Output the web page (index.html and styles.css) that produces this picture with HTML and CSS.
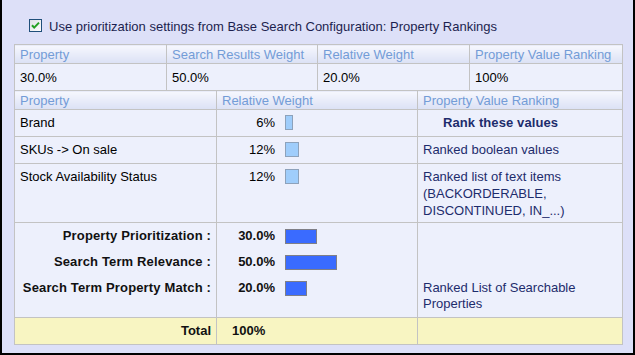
FILE: index.html
```html
<!DOCTYPE html>
<html>
<head>
<meta charset="utf-8">
<link rel="stylesheet" href="styles.css">
</head>
<body>
<div class="panel">
  <div class="opt">
    <svg class="cb" width="13" height="13" viewBox="0 0 13 13">
      <defs>
        <linearGradient id="cbg" x1="0" y1="0" x2="1" y2="1">
          <stop offset="0" stop-color="#dcdfe4"/>
          <stop offset="1" stop-color="#ffffff"/>
        </linearGradient>
      </defs>
      <rect x="0.5" y="0.5" width="12" height="12" fill="url(#cbg)" stroke="#1f4f7a"/>
      <path d="M3 6.2 L5.2 8.6 L10 3.6" fill="none" stroke="#22a022" stroke-width="2"/>
    </svg>
    <span>Use prioritization settings from Base Search Configuration: Property Rankings</span>
  </div>

  <table class="t1">
    <colgroup><col class="c1"><col class="c2"><col class="c3"><col class="c4"></colgroup>
    <tr class="hd"><th>Property</th><th>Search Results Weight</th><th>Relative Weight</th><th>Property Value Ranking</th></tr>
    <tr class="dr"><td>30.0%</td><td>50.0%</td><td>20.0%</td><td>100%</td></tr>
  </table>

  <table class="t2">
    <colgroup><col class="d1"><col class="d2"><col class="d3"></colgroup>
    <tr class="hd"><th>Property</th><th>Relative Weight</th><th>Property Value Ranking</th></tr>
    <tr class="r1">
      <td class="top">Brand</td>
      <td class="top wcell"><div class="w"><span class="pct">6%</span><span class="bar sm" style="width:8px"></span></div></td>
      <td class="top rk"><span class="rkb">Rank these values</span></td>
    </tr>
    <tr class="r2">
      <td class="top">SKUs -&gt; On sale</td>
      <td class="top wcell"><div class="w"><span class="pct">12%</span><span class="bar sm" style="width:14px"></span></div></td>
      <td class="top rk">Ranked boolean values</td>
    </tr>
    <tr class="r3">
      <td class="top">Stock Availability Status</td>
      <td class="top wcell"><div class="w"><span class="pct">12%</span><span class="bar sm" style="width:14px"></span></div></td>
      <td class="top rk list">Ranked list of text items (BACKORDERABLE, DISCONTINUED, IN_...)</td>
    </tr>
    <tr class="r4">
      <td class="top lbls">
        <div class="sub">Property Prioritization :</div>
        <div class="sub">Search Term Relevance :</div>
        <div class="sub">Search Term Property Match :</div>
      </td>
      <td class="top wcell">
        <div class="sub w b"><span class="pct">30.0%</span><span class="bar big" style="width:32px"></span></div>
        <div class="sub w b"><span class="pct">50.0%</span><span class="bar big" style="width:52px"></span></div>
        <div class="sub w b"><span class="pct">20.0%</span><span class="bar big" style="width:22px"></span></div>
      </td>
      <td class="bot rk">Ranked List of Searchable Properties</td>
    </tr>
    <tr class="tot">
      <td class="tl">Total</td>
      <td class="tv">100%</td>
      <td></td>
    </tr>
  </table>
</div>
</body>
</html>
```

FILE: styles.css
```css
html, body {
  margin: 0;
  padding: 0;
}
body {
  font-family: "Liberation Sans", Arial, sans-serif;
  font-size: 13px;
  background: #dde0f8;
}
.panel {
  box-sizing: border-box;
  width: 635px;
  height: 355px;
  background: #dde0f8;
  border-left: 2px solid #000;
  border-right: 2px solid #000;
  border-bottom: 2px solid #000;
  padding: 19px 0 0 12px;
}
.opt {
  display: flex;
  align-items: flex-start;
  gap: 7px;
  padding-left: 15px;
  height: 15px;
  line-height: 15px;
  color: #1c1f4f;
}
.cb {
  display: block;
  flex: none;
}
table {
  border-collapse: collapse;
  table-layout: fixed;
  width: 608px;
}
.t1 { margin-top: 10px; }
.t2 { margin-top: -1px; }
.c1 { width: 152px; }
.c2 { width: 151px; }
.c3 { width: 152px; }
.c4 { width: 153px; }
.d1 { width: 202px; }
.d2 { width: 201px; }
.d3 { width: 205px; }
th, td {
  border: 1px solid #c3c3c3;
  padding: 0 5px;
  background: #edf0fc;
  text-align: left;
  font-weight: normal;
  line-height: 16px;
  color: #000;
}
th {
  color: #739cd7;
  background: linear-gradient(#f6f7fe, #dbe1f5);
  vertical-align: middle;
  padding-top: 1px;
  line-height: 15px;
}
.hd { height: 19px; }
.dr { height: 27px; }
.dr td { vertical-align: middle; line-height: 15px; }
.r1 { height: 27px; }
.r2 { height: 27px; }
.r3 { height: 59px; }
.r4 { height: 95px; }
.tot { height: 27px; }
td.top { vertical-align: top; padding-top: 5px; }
td.bot { vertical-align: bottom; padding-bottom: 5px; }
td.wcell { padding-left: 0; padding-right: 0; }
td.list { line-height: 17px; padding-top: 4px; }
.w {
  display: flex;
  align-items: flex-start;
}
.pct {
  width: 58px;
  text-align: right;
  margin-right: 10px;
  flex: none;
}
.bar {
  display: block;
  box-sizing: border-box;
  height: 15px;
  flex: none;
}
.bar.sm {
  background: #9fcdfb;
  border: 1px solid #8da2bb;
}
.bar.big {
  background: #3a6bff;
  border: 1px solid #7f7f86;
}
.rk { color: #1d2c6c; }
.rkb {
  font-weight: bold;
  padding-left: 20px;
  letter-spacing: 0.1px;
}
.r4 td.top { padding-top: 0; }
.sub {
  height: 26px;
  line-height: 16px;
}
.lbls .sub {
  display: flex;
  align-items: center;
  justify-content: flex-end;
  font-weight: bold;
  color: #111;
  letter-spacing: 0.15px;
}
.sub.w {
  align-items: center;
}
.b .pct { font-weight: bold; color: #111; }
.tot td {
  background: #f8f5c2;
  vertical-align: middle;
  font-weight: bold;
  color: #111;
}
.tot td.tl { text-align: right; }
.tot td.tv { padding-left: 15px; }
```
